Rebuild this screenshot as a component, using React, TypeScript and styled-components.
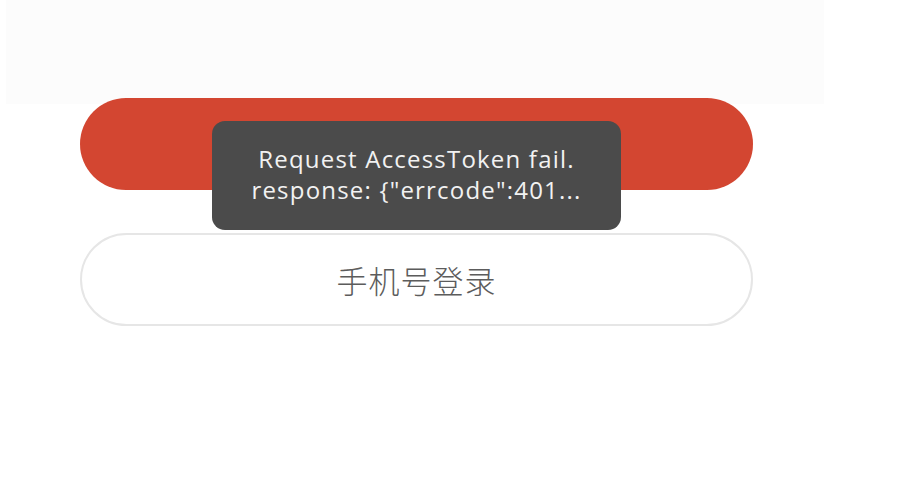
import styled, { createGlobalStyle } from 'styled-components';

const GlobalStyle = createGlobalStyle`
  html, body {
    margin: 0;
    padding: 0;
    background: #ffffff;
    font-family: "Noto Sans", "Noto Sans CJK SC", sans-serif;
  }
`;

const Page = styled.div`
  width: 906px;
  height: 500px;
  position: relative;
  overflow: hidden;
`;

const TopBand = styled.div`
  margin-left: 6px;
  width: 818px;
  height: 104px;
  background: #fcfcfc;
`;

const Actions = styled.div`
  position: relative;
  margin-top: -6px;
  margin-left: 80px;
  width: 673px;
  display: flex;
  flex-direction: column;
  gap: 43px;
`;

const PillButton = styled.button<{ $primary?: boolean }>`
  box-sizing: border-box;
  width: 100%;
  height: ${(p) => (p.$primary ? '92px' : '93px')};
  border-radius: 47px;
  border: ${(p) => (p.$primary ? 'none' : '2px solid #e6e6e6')};
  background: ${(p) => (p.$primary ? '#d34631' : '#ffffff')};
  color: ${(p) => (p.$primary ? '#ffffff' : '#5c5c5c')};
  font-family: "Noto Sans CJK SC", "Noto Sans", sans-serif;
  font-size: 31px;
  font-weight: 300;
  letter-spacing: 1px;
  padding: 0;
  cursor: pointer;
`;

const Toast = styled.div`
  position: absolute;
  top: 23px;
  left: 132px;
  width: 409px;
  height: 109px;
  box-sizing: border-box;
  border-radius: 13px;
  background: #4b4b4b;
  color: #f2f2f2;
  font-family: "Open Sans", "Noto Sans", sans-serif;
  font-size: 24px;
  letter-spacing: 1.2px;
  line-height: 31px;
  text-align: center;
  white-space: nowrap;
  display: flex;
  flex-direction: column;
  justify-content: center;
  padding-bottom: 3px;
`;

export default function App() {
  return (
    <Page>
      <GlobalStyle />
      <TopBand />
      <Actions>
        <PillButton $primary aria-label="微信登录" />
        <PillButton>手机号登录</PillButton>
        <Toast>
          <div>Request AccessToken fail.</div>
          <div>response: {'{"errcode":401...'}</div>
        </Toast>
      </Actions>
    </Page>
  );
}
